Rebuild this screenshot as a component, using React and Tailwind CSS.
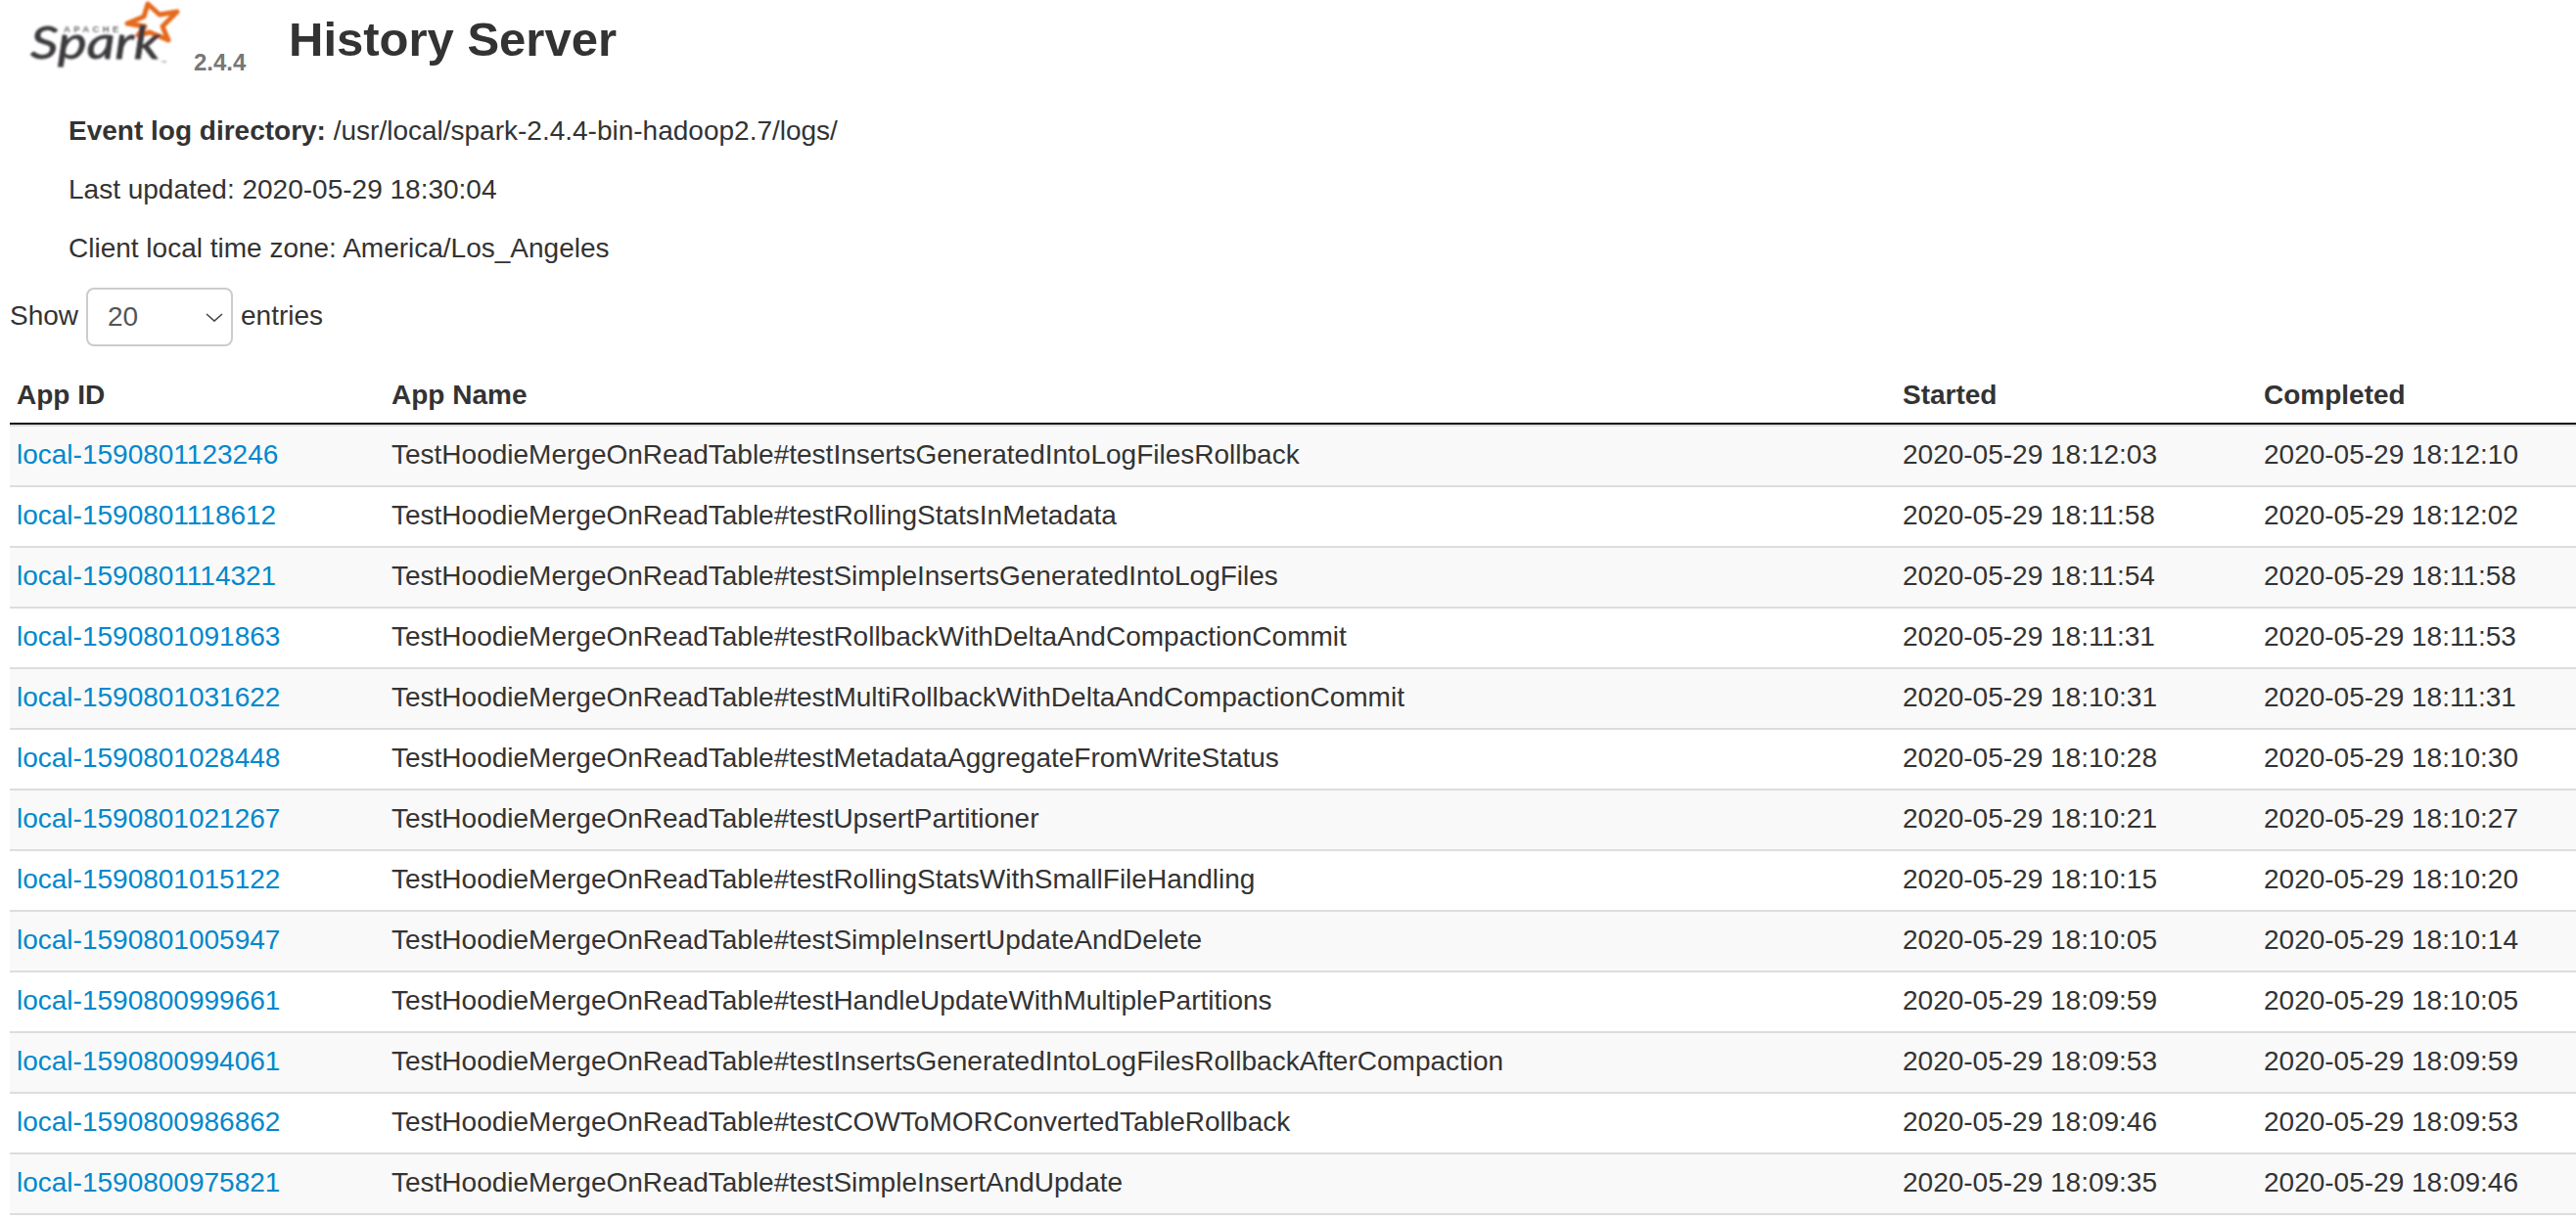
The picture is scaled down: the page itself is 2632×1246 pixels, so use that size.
const rows = [
  ["local-1590801123246", "TestHoodieMergeOnReadTable#testInsertsGeneratedIntoLogFilesRollback", "2020-05-29 18:12:03", "2020-05-29 18:12:10"],
  ["local-1590801118612", "TestHoodieMergeOnReadTable#testRollingStatsInMetadata", "2020-05-29 18:11:58", "2020-05-29 18:12:02"],
  ["local-1590801114321", "TestHoodieMergeOnReadTable#testSimpleInsertsGeneratedIntoLogFiles", "2020-05-29 18:11:54", "2020-05-29 18:11:58"],
  ["local-1590801091863", "TestHoodieMergeOnReadTable#testRollbackWithDeltaAndCompactionCommit", "2020-05-29 18:11:31", "2020-05-29 18:11:53"],
  ["local-1590801031622", "TestHoodieMergeOnReadTable#testMultiRollbackWithDeltaAndCompactionCommit", "2020-05-29 18:10:31", "2020-05-29 18:11:31"],
  ["local-1590801028448", "TestHoodieMergeOnReadTable#testMetadataAggregateFromWriteStatus", "2020-05-29 18:10:28", "2020-05-29 18:10:30"],
  ["local-1590801021267", "TestHoodieMergeOnReadTable#testUpsertPartitioner", "2020-05-29 18:10:21", "2020-05-29 18:10:27"],
  ["local-1590801015122", "TestHoodieMergeOnReadTable#testRollingStatsWithSmallFileHandling", "2020-05-29 18:10:15", "2020-05-29 18:10:20"],
  ["local-1590801005947", "TestHoodieMergeOnReadTable#testSimpleInsertUpdateAndDelete", "2020-05-29 18:10:05", "2020-05-29 18:10:14"],
  ["local-1590800999661", "TestHoodieMergeOnReadTable#testHandleUpdateWithMultiplePartitions", "2020-05-29 18:09:59", "2020-05-29 18:10:05"],
  ["local-1590800994061", "TestHoodieMergeOnReadTable#testInsertsGeneratedIntoLogFilesRollbackAfterCompaction", "2020-05-29 18:09:53", "2020-05-29 18:09:59"],
  ["local-1590800986862", "TestHoodieMergeOnReadTable#testCOWToMORConvertedTableRollback", "2020-05-29 18:09:46", "2020-05-29 18:09:53"],
  ["local-1590800975821", "TestHoodieMergeOnReadTable#testSimpleInsertAndUpdate", "2020-05-29 18:09:35", "2020-05-29 18:09:46"],
];

function SparkLogo() {
  return (
    <svg width="170" height="80" viewBox="29 0 170 80" className="shrink-0 block" aria-label="Apache Spark">
      <defs>
        <filter id="soft" x="-5%" y="-5%" width="110%" height="110%">
          <feGaussianBlur stdDeviation="0.8" />
        </filter>
      </defs>
      <g filter="url(#soft)">
        <path
          d="M130 24 L147 17 L151 4 L163 15 L181 12 L166 27 L172 41 L153 33 L141 36 L148 27 Z"
          fill="none"
          stroke="#e56b1f"
          strokeWidth="5"
          strokeLinejoin="round"
        />
        <text x="65" y="33" fontFamily="'Liberation Sans', sans-serif" fontWeight="700" fontSize="9.5" letterSpacing="3.4" fill="#6a6a6a">APACHE</text>
        <text transform="translate(31 60) scale(1.34 1.12)" x="0" y="0" fontFamily="'Lato', 'Liberation Sans', sans-serif" fontWeight="400" fontStyle="italic" fontSize="42" stroke="#3c3a3e" strokeWidth="0.7" fill="#3c3a3e">Spark</text>
        <text x="164" y="66" fontFamily="'Liberation Sans', sans-serif" fontSize="6" fill="#777777">™</text>
      </g>
    </svg>
  );
}

export default function App() {
  return (
    <div className="font-['Liberation_Sans',Arial,sans-serif] text-[28px] leading-[40px] text-[#333333] bg-white h-[1246px] overflow-hidden">
      <div className="flex items-start h-[80px] pl-[29px]">
        <SparkLogo />
        <span className="text-[24px] leading-[24px] font-bold text-[#777777] mt-[52px] ml-[-1px] w-[97px] shrink-0">2.4.4</span>
        <h3 className="text-[49px] leading-[80px] font-bold">History Server</h3>
      </div>
      <ul className="pl-[70px] pt-[34px] list-none">
        <li className="h-[60px]"><strong>Event log directory:</strong> /usr/local/spark-2.4.4-bin-hadoop2.7/logs/</li>
        <li className="h-[60px]">Last updated: 2020-05-29 18:30:04</li>
        <li className="h-[60px]">Client local time zone: America/Los_Angeles</li>
      </ul>
      <div className="flex items-center h-[60px] pl-[10px] gap-[8px]">
        <span className="mb-[2px]">Show</span>
        <div className="relative">
          <select defaultValue="20" className="block appearance-none w-[150px] h-[60px] pl-[20px] text-[28px] text-[#555555] bg-white border-2 border-[#cccccc] rounded-[8px]">
            <option value="10">10</option>
            <option value="20">20</option>
            <option value="40">40</option>
          </select>
          <svg width="18" height="9" viewBox="0 0 18 9" className="absolute right-[10px] top-[26px] pointer-events-none" aria-hidden="true">
            <polyline points="1,1 9,8 17,1" fill="none" stroke="#444444" strokeWidth="1.6" />
          </svg>
        </div>
        <span className="mb-[2px]">entries</span>
      </div>
      <table className="ml-[10px] mt-[21px] w-[2622px] table-fixed border-separate border-spacing-0">
        <colgroup>
          <col className="w-[384px]" />
          <col className="w-[1544px]" />
          <col className="w-[369px]" />
          <col />
        </colgroup>
        <thead>
          <tr>
            <th className="text-left font-bold pl-[7px] p-0 h-[59px] border-b-2 border-[#111111]">App ID</th>
            <th className="text-left font-bold pl-[6px] p-0 border-b-2 border-[#111111]">App Name</th>
            <th className="text-left font-bold pl-[6px] p-0 border-b-2 border-[#111111]">Started</th>
            <th className="text-left font-bold pl-[6px] p-0 border-b-2 border-[#111111]">Completed</th>
          </tr>
        </thead>
        <tbody>
          {rows.map((r, i) => {
            const bg = i % 2 === 0 ? "bg-[#f9f9f9]" : "bg-white";
            return (
              <tr key={r[0]} className={bg}>
                <td className="pl-[7px] pr-[6px] pt-[9px] pb-[11px] whitespace-nowrap border-t-2 border-[#dddddd]"><a href="#" className="text-[#0088cc]">{r[0]}</a></td>
                <td className="px-[6px] pt-[9px] pb-[11px] whitespace-nowrap border-t-2 border-[#dddddd]">{r[1]}</td>
                <td className="px-[6px] pt-[9px] pb-[11px] whitespace-nowrap border-t-2 border-[#dddddd]">{r[2]}</td>
                <td className="px-[6px] pt-[9px] pb-[11px] whitespace-nowrap border-t-2 border-[#dddddd]">{r[3]}</td>
              </tr>
            );
          })}
          <tr>
            <td colSpan={4} className="p-0 h-[2px] border-t-2 border-[#dddddd]"></td>
          </tr>
        </tbody>
      </table>
    </div>
  );
}
